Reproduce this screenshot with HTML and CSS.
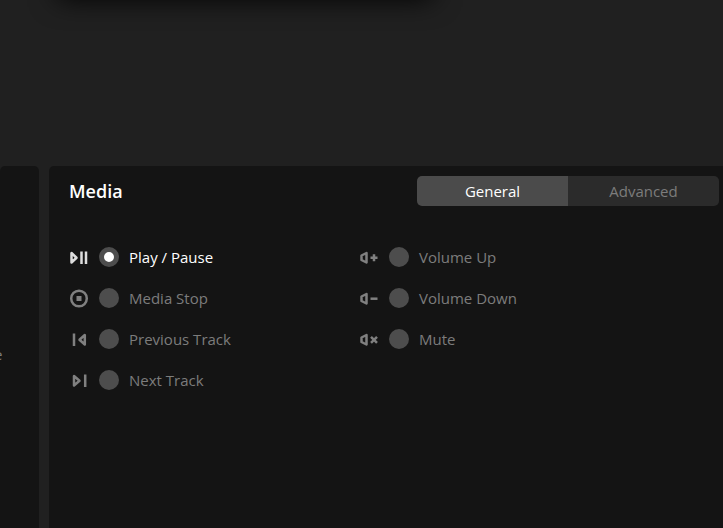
FILE: index.html
```html
<!DOCTYPE html>
<html lang="en">
<head>
<meta charset="utf-8">
<title>Media</title>
<link rel="stylesheet" href="styles.css">
</head>
<body>
<header class="stage"><div class="device"></div></header>
<main class="panels">
  <aside class="panel side"><span class="side-label">e</span></aside>
  <section class="panel media">
    <div class="head">
      <h1 class="title">Media</h1>
      <div class="tabs">
        <button class="tab active" type="button">General</button>
        <button class="tab" type="button">Advanced</button>
      </div>
    </div>
    <form class="options">
      <div class="column">
        <label class="option">
          <svg class="icon" viewBox="0 0 20 20"><path d="M2.500 6v9.500l5-4.750z"/><path d="M12.500 4.500v12.500M17 4.500v12.500"/></svg>
          <input class="radio" type="radio" name="action" checked><span>Play / Pause</span>
        </label>
        <label class="option">
          <svg class="icon" viewBox="0 0 20 20"><circle cx="10" cy="10.500" r="7.800"/><path class="solid" d="M7.500 8h5v5h-5z"/></svg>
          <input class="radio" type="radio" name="action"><span>Media Stop</span>
        </label>
        <label class="option">
          <svg class="icon" viewBox="0 0 20 20"><path d="M5 4.500v12.500M15.800 6v9.500L10.500 10.750z"/></svg>
          <input class="radio" type="radio" name="action"><span>Previous Track</span>
        </label>
        <label class="option">
          <svg class="icon" viewBox="0 0 20 20"><path d="M5 6v9.500L10.500 10.750zM16.200 4.500v12.500"/></svg>
          <input class="radio" type="radio" name="action"><span>Next Track</span>
        </label>
      </div>
      <div class="column">
        <label class="option">
          <svg class="icon" viewBox="0 0 20 20"><path d="M2.500 8.500v4.500l5 2.500V6z"/><path d="M11.500 10.700h7M15 7.200v7"/></svg>
          <input class="radio" type="radio" name="action"><span>Volume Up</span>
        </label>
        <label class="option">
          <svg class="icon" viewBox="0 0 20 20"><path d="M2.500 8.500v4.500l5 2.500V6z"/><path d="M11.500 10.700h7"/></svg>
          <input class="radio" type="radio" name="action"><span>Volume Down</span>
        </label>
        <label class="option">
          <svg class="icon" viewBox="0 0 20 20"><path d="M2.500 8.500v4.500l5 2.500V6z"/><path d="M12 7.800l6 6M18 7.800l-6 6"/></svg>
          <input class="radio" type="radio" name="action"><span>Mute</span>
        </label>
      </div>
    </form>
  </section>
</main>
</body>
</html>
```
FILE: styles.css
```css
* { box-sizing: border-box; }
body {
  margin: 0;
  min-height: 100vh;
  display: flex;
  flex-direction: column;
  overflow: hidden;
  background: #202020;
  color: #7c7c7c;
  font: 15px/20px "Open Sans", sans-serif;
}
.stage { height: 166px; flex: none; overflow: hidden; }
.device {
  width: 370px;
  height: 40px;
  margin: -46px 0 0 60px;
  box-shadow: 0 2px 28px 2px #000;
}
.panels {
  flex: 1;
  display: grid;
  grid-template-columns: 39px 1fr;
  gap: 10px;
}
.panel { background: #141414; border-radius: 5px 5px 0 0; }
.side { overflow: hidden; padding-top: 178px; }
.side-label { margin-left: -6px; }
.media { padding: 10px 4px 0 20px; border-top-right-radius: 0; }
.head { display: flex; justify-content: space-between; align-items: center; }
.title { margin: 0; color: #fff; font-size: 18px; line-height: 30px; font-weight: 600; }
.tabs {
  display: grid;
  grid-template-columns: 1fr 1fr;
  width: 302px;
  height: 30px;
  border-radius: 5px;
  overflow: hidden;
}
.tab { border: 0; padding: 0; background: #2b2b2b; color: #7c7c7c; font: inherit; }
.tab.active { background: #4b4b4b; color: #fff; }
.options { display: flex; margin-top: 41px; }
.column { display: flex; flex-direction: column; gap: 21px; width: 290px; }
.option { display: flex; align-items: center; gap: 10px; height: 20px; }
.option:has(:checked) { color: #fff; }
.icon {
  width: 20px;
  height: 20px;
  flex: none;
  fill: none;
  stroke: #808080;
  stroke-width: 2.500;
  stroke-linejoin: round;
}
.option:has(:checked) .icon { stroke: #ddd; }
.icon .solid { fill: #808080; stroke: none; }
.radio {
  appearance: none;
  width: 20px;
  height: 20px;
  flex: none;
  margin: 0;
  border-radius: 50%;
  background: #4d4d4d;
}
.radio:checked { border: 5px solid #4d4d4d; background: #fff; }
```
